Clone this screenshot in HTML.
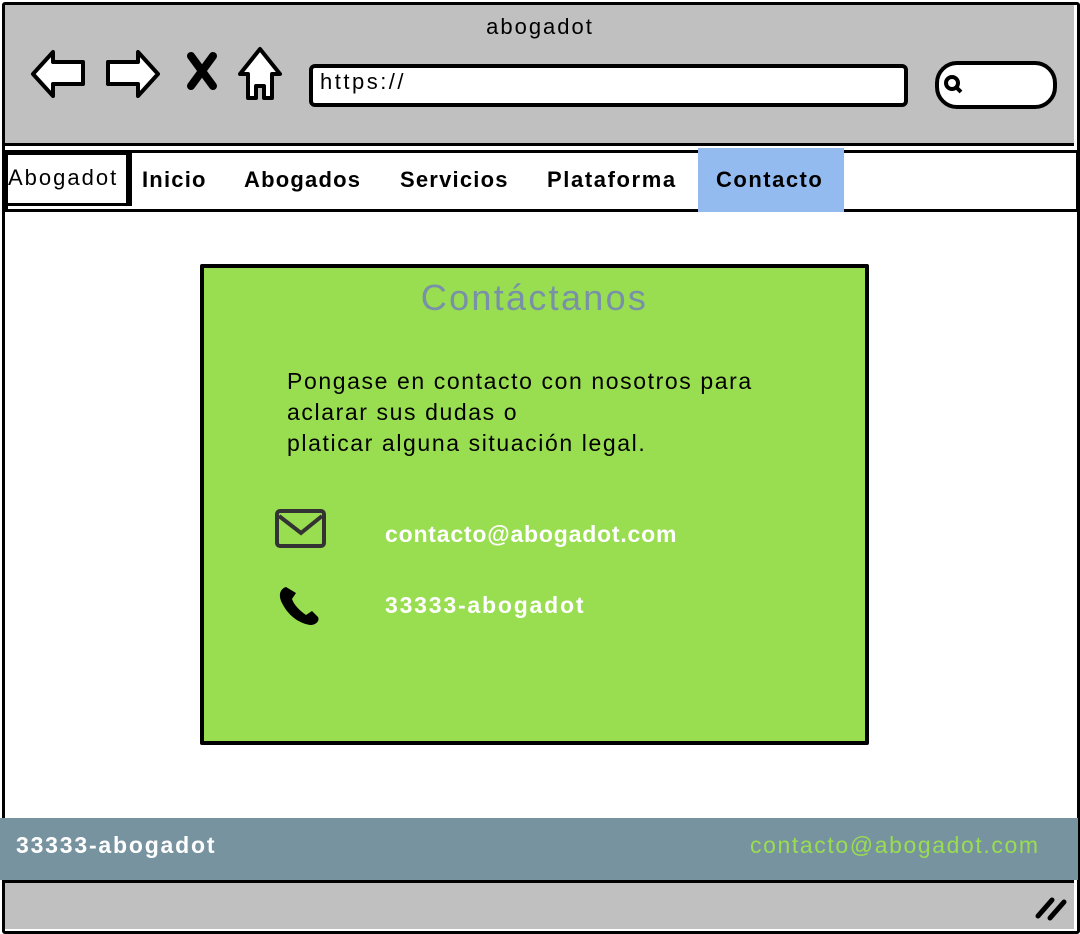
<!DOCTYPE html>
<html><head><style>
body{margin:0;width:1080px;height:934px;position:relative;background:#fff;font-family:"Liberation Sans",sans-serif;overflow:hidden}
.a{position:absolute}
.n{font-size:22px;font-weight:bold;letter-spacing:1.2px}
</style></head><body>
<div class="a" style="left:2px;top:2px;width:1072px;height:926px;border:3px solid #000;border-radius:3px"></div>
<div class="a" style="left:5px;top:5px;width:1069px;height:138px;background:#c0c0c0;border-bottom:3px solid #000"></div>
<div class="a" style="left:0;top:14px;width:1080px;text-align:center;font-size:22px;letter-spacing:2px">abogadot</div>
<svg class="a" style="left:28px;top:44px" width="270" height="60">
<path d="M5 30 L25 8 L25 18 L55 18 L55 40 L25 40 L25 52 Z" fill="#fff" stroke="#000" stroke-width="4" stroke-linejoin="round"/>
<path d="M130 30 L110 8 L110 18 L80 18 L80 40 L110 40 L110 52 Z" fill="#fff" stroke="#000" stroke-width="4" stroke-linejoin="round"/>
<path d="M163 12 L185 42 M185 12 L163 42" stroke="#000" stroke-width="8" stroke-linecap="round"/>
<path d="M232 5 L252 30 L244 30 L244 54 L236 54 L236 42 L228 42 L228 54 L220 54 L220 30 L212 30 Z" fill="#fff" stroke="#000" stroke-width="4" stroke-linejoin="round"/>
</svg>
<div class="a" style="left:309px;top:64px;width:591px;height:35px;background:#fff;border:4px solid #000;border-radius:6px"></div>
<div class="a" style="left:320px;top:69px;font-size:22px;letter-spacing:2.5px">https://</div>
<div class="a" style="left:935px;top:61px;width:114px;height:40px;background:#fff;border:4px solid #000;border-radius:22px"></div>
<svg class="a" style="left:940px;top:72px" width="30" height="26"><circle cx="12" cy="11" r="6" fill="none" stroke="#000" stroke-width="4"/><path d="M16 15 L21 20" stroke="#000" stroke-width="4"/></svg>
<div class="a" style="left:5px;top:150px;width:1068px;height:56px;border:3px solid #000;background:#fff"></div>
<div class="a" style="left:5px;top:152px;width:118px;height:48px;border:3px solid #000;border-right-width:6px;background:#fff"></div>
<div class="a" style="left:8px;top:165px;font-size:22px;letter-spacing:2px">Abogadot</div>
<div class="a" style="left:698px;top:148px;width:146px;height:64px;background:#94bbf0"></div>
<div class="a n" style="left:142px;top:167px">Inicio</div>
<div class="a n" style="left:244px;top:167px">Abogados</div>
<div class="a n" style="left:400px;top:167px">Servicios</div>
<div class="a n" style="left:547px;top:167px;letter-spacing:1.6px">Plataforma</div>
<div class="a n" style="left:716px;top:167px;letter-spacing:1.5px">Contacto</div>
<div class="a" style="left:200px;top:264px;width:661px;height:473px;background:#99dd50;border:4px solid #000;border-radius:2px"></div>
<div class="a" style="left:200px;top:277px;width:669px;text-align:center;font-size:36px;color:#7890a8;letter-spacing:2.3px">Contáctanos</div>
<div class="a" style="left:287px;top:366px;font-size:23px;line-height:31px;letter-spacing:1.6px">Pongase en contacto con nosotros para<br>aclarar sus dudas o<br>platicar alguna situación legal.</div>
<svg class="a" style="left:274px;top:508px" width="54" height="42"><rect x="3" y="3" width="47" height="35" rx="3" fill="none" stroke="#333" stroke-width="4"/><path d="M5 8 L27 25 L48 8" fill="none" stroke="#333" stroke-width="4"/></svg>
<svg class="a" style="left:278px;top:585px" width="44" height="42"><path d="M8 2 C2 4 0 10 4 18 C10 30 20 38 32 40 C38 40 42 36 40 32 L34 26 L28 30 C22 26 16 20 14 14 L18 8 Z" fill="#000"/></svg>
<div class="a" style="left:385px;top:521px;font-size:23px;color:#fff;font-weight:bold;letter-spacing:0.8px">contacto@abogadot.com</div>
<div class="a" style="left:385px;top:592px;font-size:23px;color:#fff;font-weight:bold;letter-spacing:1.8px">33333-abogadot</div>
<div class="a" style="left:0;top:818px;width:1078px;height:62px;background:#7893a0"></div>
<div class="a" style="left:16px;top:832px;font-size:23px;color:#fff;font-weight:bold;letter-spacing:1.8px">33333-abogadot</div>
<div class="a" style="left:750px;top:832px;font-size:23px;color:#99dd50;letter-spacing:1.6px">contacto@abogadot.com</div>
<div class="a" style="left:5px;top:880px;width:1069px;height:46px;background:#c0c0c0;border-top:3px solid #000"></div>
<svg class="a" style="left:1034px;top:894px" width="36" height="28"><path d="M4 22 L18 6 M16 24 L30 8" stroke="#000" stroke-width="5" stroke-linecap="round"/></svg>
</body></html>
